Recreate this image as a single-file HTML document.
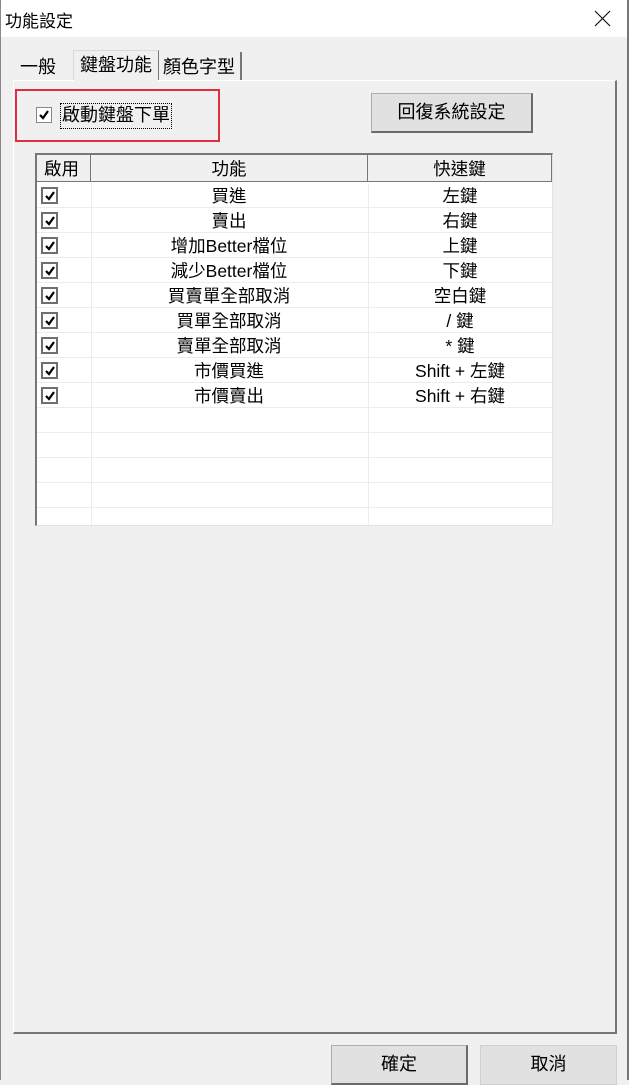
<!DOCTYPE html>
<html><head><meta charset="utf-8"><style>
*{box-sizing:border-box;margin:0;padding:0}
body{width:629px;height:1080px;background:#f0f0f0;font-family:"Liberation Sans","Noto Sans CJK TC",sans-serif;color:#000;position:relative;overflow:hidden;font-size:17px}
.a{position:absolute}
.cb{position:absolute;width:17px;height:17px;border:2px solid #6f6f6f;background:#fff}
.cb svg{position:absolute;left:1px;top:1px}
.btn{position:absolute;background:#e1e1e1;border:1px solid #adadad;border-right:2px solid #6a6a6a;border-bottom:2px solid #6a6a6a;text-align:center;font-size:18px}
.row{position:absolute;left:37px;width:515px;height:25px;border-bottom:1px solid #ececec;background:#fff}
.row span{position:absolute;top:2px;text-align:center;font-size:17.5px;line-height:22px}
</style></head><body>
<div class="a" style="left:0;top:0;width:629px;height:37px;background:#fff"></div>
<div class="a" style="left:0;top:0;width:1px;height:1080px;background:#888"></div>
<div class="a" style="left:627px;top:0;width:2px;height:1080px;background:#777"></div>
<div class="a" style="left:5px;top:7px;font-size:17px">功能設定</div>
<svg class="a" style="left:594px;top:10px" width="17" height="17"><path d="M1 1L16 16M16 1L1 16" stroke="#111" stroke-width="1.2"/></svg>

<div class="a" style="left:20px;top:53px;font-size:18px">一般</div>
<div class="a" style="left:73px;top:50px;width:86px;height:31px;background:#f0f0f0;border:1px solid #d9d9d9;border-bottom:none;border-right:1px solid #777"></div>
<div class="a" style="left:80px;top:51px;font-size:18px">鍵盤功能</div>
<div class="a" style="left:159px;top:52px;width:83px;height:28px;border-right:2px solid #777"></div>
<div class="a" style="left:163px;top:53px;font-size:18px">顏色字型</div>
<div class="a" style="left:13px;top:80px;width:604px;height:954px;border:1px solid #fff;border-right:2px solid #777;border-bottom:2px solid #777"></div>
<div class="a" style="left:74px;top:79px;width:84px;height:3px;background:#f0f0f0"></div>

<div class="a" style="left:15px;top:89px;width:205px;height:53px;border:2px solid #e0303e"></div>
<div class="cb" style="left:36px;top:107px;width:16px;height:16px;border:1px solid #888;"><svg width="12" height="12"><path d="M2 6L5 9L10 2" stroke="#000" stroke-width="2.2" fill="none"/></svg></div>
<div class="a" style="left:60px;top:103px;height:26px;border:1px dotted #000;padding:0 1px;font-size:18px;line-height:23px">啟動鍵盤下單</div>

<div class="btn" style="left:371px;top:93px;width:162px;height:40px;line-height:37px">回復系統設定</div>

<div class="a" style="left:35px;top:153px;width:518px;height:373px;background:#fff;border-left:2px solid #777;border-top:2px solid #777;border-right:1px solid #e3e3e3;border-bottom:1px solid #e3e3e3"></div>
<div class="a" style="left:37px;top:155px;width:515px;height:27px;background:#f0f0f0;border-bottom:1px solid #777"></div>
<div class="a" style="left:90px;top:155px;width:1px;height:27px;background:#777"></div>
<div class="a" style="left:367px;top:155px;width:1px;height:27px;background:#777"></div>
<div class="a" style="left:551px;top:155px;width:1px;height:27px;background:#777"></div>
<div class="a" style="left:44px;top:156px;font-size:17.5px">啟用</div>
<div class="a" style="left:91px;top:156px;width:276px;text-align:center;font-size:17.5px">功能</div>
<div class="a" style="left:368px;top:156px;width:183px;text-align:center;font-size:17.5px">快速鍵</div>

<div class="row" style="top:183px"><span style="left:54px;width:276px">買進</span><span style="left:331px;width:184px">左鍵</span></div>
<div class="row" style="top:208px"><span style="left:54px;width:276px">賣出</span><span style="left:331px;width:184px">右鍵</span></div>
<div class="row" style="top:233px"><span style="left:54px;width:276px">增加Better檔位</span><span style="left:331px;width:184px">上鍵</span></div>
<div class="row" style="top:258px"><span style="left:54px;width:276px">減少Better檔位</span><span style="left:331px;width:184px">下鍵</span></div>
<div class="row" style="top:283px"><span style="left:54px;width:276px">買賣單全部取消</span><span style="left:331px;width:184px">空白鍵</span></div>
<div class="row" style="top:308px"><span style="left:54px;width:276px">買單全部取消</span><span style="left:331px;width:184px">/ 鍵</span></div>
<div class="row" style="top:333px"><span style="left:54px;width:276px">賣單全部取消</span><span style="left:331px;width:184px">* 鍵</span></div>
<div class="row" style="top:358px"><span style="left:54px;width:276px">市價買進</span><span style="left:331px;width:184px">Shift + 左鍵</span></div>
<div class="row" style="top:383px"><span style="left:54px;width:276px">市價賣出</span><span style="left:331px;width:184px">Shift + 右鍵</span></div>
<div class="row" style="top:408px"></div>
<div class="row" style="top:433px"></div>
<div class="row" style="top:458px"></div>
<div class="row" style="top:483px"></div>
<div class="a" style="left:91px;top:183px;width:1px;height:342px;background:#ececec"></div>
<div class="a" style="left:368px;top:183px;width:1px;height:342px;background:#ececec"></div>

<div class="cb" style="left:41px;top:187px"><svg width="12" height="12"><path d="M2 6L5 9L10 2" stroke="#000" stroke-width="2.2" fill="none"/></svg></div>
<div class="cb" style="left:41px;top:212px"><svg width="12" height="12"><path d="M2 6L5 9L10 2" stroke="#000" stroke-width="2.2" fill="none"/></svg></div>
<div class="cb" style="left:41px;top:237px"><svg width="12" height="12"><path d="M2 6L5 9L10 2" stroke="#000" stroke-width="2.2" fill="none"/></svg></div>
<div class="cb" style="left:41px;top:262px"><svg width="12" height="12"><path d="M2 6L5 9L10 2" stroke="#000" stroke-width="2.2" fill="none"/></svg></div>
<div class="cb" style="left:41px;top:287px"><svg width="12" height="12"><path d="M2 6L5 9L10 2" stroke="#000" stroke-width="2.2" fill="none"/></svg></div>
<div class="cb" style="left:41px;top:312px"><svg width="12" height="12"><path d="M2 6L5 9L10 2" stroke="#000" stroke-width="2.2" fill="none"/></svg></div>
<div class="cb" style="left:41px;top:337px"><svg width="12" height="12"><path d="M2 6L5 9L10 2" stroke="#000" stroke-width="2.2" fill="none"/></svg></div>
<div class="cb" style="left:41px;top:362px"><svg width="12" height="12"><path d="M2 6L5 9L10 2" stroke="#000" stroke-width="2.2" fill="none"/></svg></div>
<div class="cb" style="left:41px;top:387px"><svg width="12" height="12"><path d="M2 6L5 9L10 2" stroke="#000" stroke-width="2.2" fill="none"/></svg></div>

<div class="btn" style="left:331px;top:1045px;width:137px;height:40px;line-height:37px">確定</div>
<div class="btn" style="left:480px;top:1045px;width:137px;height:40px;line-height:37px;border:1px solid #d0d0d0">取消</div>
</body></html>
